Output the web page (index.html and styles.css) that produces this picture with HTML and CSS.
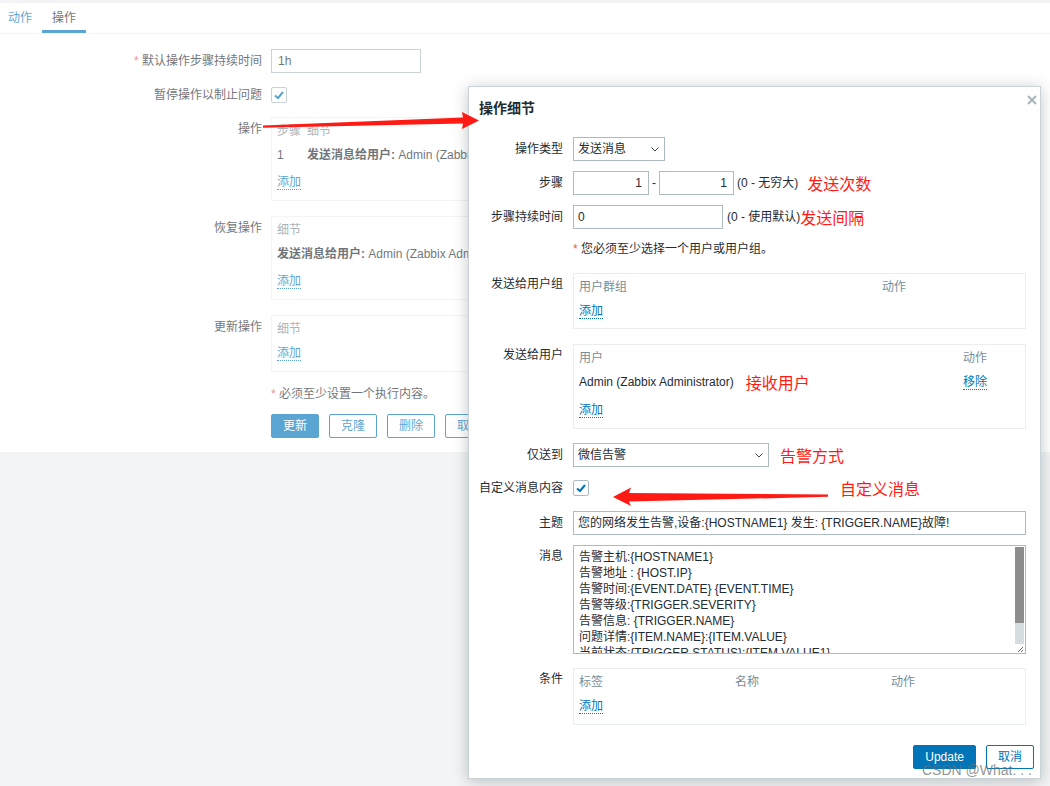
FILE: index.html
```html
<!DOCTYPE html>
<html lang="zh-CN">
<head>
<meta charset="utf-8">
<title>操作</title>
<link rel="stylesheet" href="styles.css">
</head>
<body>
<div class="page">
  <div class="tabs">
    <span class="tab tab-first tab-link">动作</span>
    <span class="tab tab-active">操作</span>
  </div>
  <div class="form">
    <div class="row">
      <div class="label"><span class="req">*</span> 默认操作步骤持续时间</div>
      <div class="input w150">1h</div>
    </div>
    <div class="row mt10">
      <div class="label">暂停操作以制止问题</div>
      <div class="check-cell"><span class="checkbox"><svg width="14" height="14" viewBox="0 0 14 14"><path d="M3 7.5 L6 10 L11 4" fill="none" stroke="#0275b8" stroke-width="2"/></svg></span></div>
    </div>
    <div class="row mt10">
      <div class="label">操作</div>
      <div class="box mbox">
        <div class="brow head"><span class="c-step">步骤</span><span>细节</span></div>
        <div class="brow"><span class="c-step">1</span><span><b>发送消息给用户:</b> Admin (Zabbix Administrator) 通过 所有介质</span></div>
        <div class="brow add"><span class="link">添加</span></div>
      </div>
    </div>
    <div class="row mt15">
      <div class="label">恢复操作</div>
      <div class="box mbox">
        <div class="brow head"><span>细节</span></div>
        <div class="brow"><span><b>发送消息给用户:</b> Admin (Zabbix Administrator) 通过 所有介质</span></div>
        <div class="brow add"><span class="link">添加</span></div>
      </div>
    </div>
    <div class="row mt15">
      <div class="label">更新操作</div>
      <div class="box mbox">
        <div class="brow head"><span>细节</span></div>
        <div class="brow"><span class="link">添加</span></div>
      </div>
    </div>
    <div class="row mt14">
      <div class="label"></div>
      <div class="note"><span class="req">*</span> 必须至少设置一个执行内容。</div>
    </div>
    <div class="row mt12">
      <div class="label"></div>
      <div class="buttons">
        <span class="btn btn-primary">更新</span>
        <span class="btn">克隆</span>
        <span class="btn">删除</span>
        <span class="btn">取消</span>
      </div>
    </div>
  </div>
</div>

<div class="overlay-bg"></div>

<div class="dialog">
  <div class="dialog-head">操作细节</div>
  <span class="close"><svg width="10" height="10" viewBox="0 0 10 10"><path d="M1 1 L9 9 M9 1 L1 9" stroke="#a9b6bd" stroke-width="2.2"/></svg></span>
  <div class="dialog-body">
    <div class="drow">
      <div class="dlabel">操作类型</div>
      <div class="input select w92"><span>发送消息</span><svg class="chev" width="8" height="5" viewBox="0 0 8 5"><path d="M0.5 0.5 L4 4 L7.5 0.5" fill="none" stroke="#3c474d" stroke-width="1"/></svg></div>
    </div>
    <div class="drow mt10">
      <div class="dlabel">步骤</div>
      <div class="ctrl-line">
        <div class="input num w76">1</div><span class="dash">-</span><div class="input num w75">1</div>
        <span class="hint ml3">(0 - 无穷大)</span><span class="anno ml9">发送次数</span>
      </div>
    </div>
    <div class="drow mt10">
      <div class="dlabel">步骤持续时间</div>
      <div class="ctrl-line">
        <div class="input w150 pl5">0</div>
        <span class="hint ml4">(0 - 使用默认)</span><span class="anno">发送间隔</span>
      </div>
    </div>
    <div class="drow mt10">
      <div class="dlabel"></div>
      <div class="dnote"><span class="req">*</span> 您必须至少选择一个用户或用户组。</div>
    </div>
    <div class="drow mt14">
      <div class="dlabel lt">发送给用户组</div>
      <div class="box dbox pb5">
        <div class="brow head"><span class="c-group">用户群组</span><span>动作</span></div>
        <div class="brow"><span class="link">添加</span></div>
      </div>
    </div>
    <div class="drow mt15">
      <div class="dlabel lt">发送给用户</div>
      <div class="box dbox">
        <div class="brow head"><span class="c-user">用户</span><span>动作</span></div>
        <div class="brow"><span class="c-user">Admin (Zabbix Administrator)<span class="anno ml12">接收用户</span></span><span class="link">移除</span></div>
        <div class="brow add4"><span class="link">添加</span></div>
      </div>
    </div>
    <div class="drow mt14">
      <div class="dlabel">仅送到</div>
      <div class="ctrl-line">
        <div class="input select w196"><span>微信告警</span><svg class="chev" width="8" height="5" viewBox="0 0 8 5"><path d="M0.5 0.5 L4 4 L7.5 0.5" fill="none" stroke="#3c474d" stroke-width="1"/></svg></div>
        <span class="anno ml11">告警方式</span>
      </div>
    </div>
    <div class="drow mt9">
      <div class="dlabel">自定义消息内容</div>
      <div class="ctrl-line">
        <span class="checkbox"><svg width="14" height="14" viewBox="0 0 14 14"><path d="M3 7.5 L6 10 L11 4" fill="none" stroke="#0275b8" stroke-width="2"/></svg></span>
        <span class="anno ml251">自定义消息</span>
      </div>
    </div>
    <div class="drow mt11">
      <div class="dlabel">主题</div>
      <div class="input wfull pl5">您的网络发生告警,设备:{HOSTNAME1} 发生: {TRIGGER.NAME}故障!</div>
    </div>
    <div class="drow mt10">
      <div class="dlabel lt">消息</div>
      <div class="textarea">
        <div class="ta-text">
          <div>告警主机:{HOSTNAME1}</div>
          <div>告警地址 : {HOST.IP}</div>
          <div>告警时间:{EVENT.DATE} {EVENT.TIME}</div>
          <div>告警等级:{TRIGGER.SEVERITY}</div>
          <div>告警信息: {TRIGGER.NAME}</div>
          <div>问题详情:{ITEM.NAME}:{ITEM.VALUE}</div>
          <div>当前状态:{TRIGGER.STATUS}:{ITEM.VALUE1}</div>
        </div>
        <div class="ta-scroll">
          <div class="ta-thumb"></div>
          <div class="ta-track"></div>
          <div class="ta-corner"><svg width="9" height="9" viewBox="0 0 9 9"><path d="M8 3 L3 8 M8 6 L6 8" stroke="#6b6b6b" stroke-width="1"/></svg></div>
        </div>
      </div>
    </div>
    <div class="drow mt14">
      <div class="dlabel lt">条件</div>
      <div class="box dbox">
        <div class="brow head"><span class="c-cond">标签</span><span class="c-cond">名称</span><span>动作</span></div>
        <div class="brow"><span class="link">添加</span></div>
      </div>
    </div>
  </div>
  <div class="dialog-foot">
    <span class="btn btn-primary">Update</span>
    <span class="btn">取消</span>
  </div>
</div>

<svg class="annot" width="1050" height="786" viewBox="0 0 1050 786">
  <polygon points="263,125.6 463,117.6 462,112 479,120.4 462,129 463,123.4 263,127.8" fill="#ff1b14"/>
  <polygon points="613,497 631,487.5 629,493 828,494.6 828,496.8 629,501.6 631,506" fill="#ff1b14"/>
</svg>

<div class="watermark">CSDN @What. . .</div>
</body>
</html>
```

FILE: styles.css
```css
* { box-sizing: border-box; }

html, body {
  margin: 0;
  padding: 0;
}

body {
  width: 1050px;
  height: 786px;
  overflow: hidden;
  position: relative;
  background: #ebeef0;
  font-family: "Liberation Sans", "Noto Sans CJK SC", sans-serif;
  font-size: 12px;
  line-height: 16px;
  color: #1f2c33;
}

/* ---------- background page ---------- */
.page {
  margin-top: 3px;
  background: #fff;
  padding-bottom: 14px;
}

.tabs {
  display: flex;
  height: 31px;
  border-bottom: 1px solid #ebeef0;
}

.tab {
  padding: 0 10px;
  line-height: 30px;
  height: 30px;
}

.tab-first { padding-left: 8px; }
.tab-link { color: #0275b8; }
.tab-active { box-shadow: inset 0 -3px 0 #0275b8; }

.form { padding-top: 15px; }

.row {
  display: flex;
  align-items: flex-start;
  gap: 9px;
}

.mt9 { margin-top: 9px; }
.mt10 { margin-top: 10px; }
.mt11 { margin-top: 11px; }
.mt12 { margin-top: 12px; }
.mt14 { margin-top: 14px; }
.mt15 { margin-top: 15px; }

.label {
  width: 262px;
  flex: none;
  text-align: right;
  line-height: 24px;
  white-space: nowrap;
}

.req { color: #e45959; }

.input {
  height: 24px;
  border: 1px solid #acbbc2;
  background: #fff;
  padding: 0 6px;
  line-height: 22px;
  white-space: nowrap;
  overflow: hidden;
  flex: none;
}

.pl5 { padding-left: 4px; }
.w75 { width: 75px; }
.w76 { width: 76px; }
.w92 { width: 92px; }
.w150 { width: 150px; }
.w196 { width: 196px; }
.wfull { width: 453px; }

.num {
  text-align: right;
  padding-right: 6px;
}

.select {
  display: flex;
  align-items: center;
  justify-content: space-between;
  padding: 0 5px 0 4px;
}

.chev { flex: none; }

.check-cell {
  height: 24px;
  display: flex;
  align-items: center;
}

.checkbox {
  width: 16px;
  height: 16px;
  border: 1px solid #acbbc2;
  border-radius: 2px;
  background: #fff;
  display: inline-flex;
  align-items: center;
  justify-content: center;
  flex: none;
}

.box {
  border: 1px solid #ebeef0;
  padding: 1px 5px 6px;
  white-space: nowrap;
  overflow: hidden;
}

.box.pb5 { padding-bottom: 5px; }

.mbox { width: 760px; }
.dbox { width: 453px; }

.brow {
  display: flex;
  line-height: 24px;
  height: 24px;
  align-items: center;
}

.brow.add { margin-top: 3px; }
.brow.add4 { margin-top: 4px; }

.head { color: #768d99; }

.c-step { width: 30px; flex: none; }
.c-group { width: 303px; flex: none; }
.c-user { width: 384px; flex: none; display: flex; align-items: center; }
.c-cond { width: 156px; flex: none; }

.link {
  color: #0275b8;
  display: inline-block;
  line-height: 14px;
  border-bottom: 1px dotted #0275b8;
}

.note { line-height: 16px; }

.buttons {
  display: flex;
  gap: 10px;
}

.btn {
  display: inline-block;
  height: 24px;
  padding: 0 11px;
  border: 1px solid #0275b8;
  border-radius: 2px;
  background: #fff;
  color: #0275b8;
  line-height: 22px;
  white-space: nowrap;
}

.btn-primary {
  background: #0275b8;
  color: #fff;
}

/* page dimming layer */
.overlay-bg {
  position: absolute;
  inset: 0;
  background: rgba(255, 255, 255, 0.35);
}

/* ---------- dialog ---------- */
.dialog {
  position: absolute;
  left: 468px;
  top: 86px;
  width: 573px;
  height: 693px;
  background: #fff;
  border: 1px solid #c9d2d7;
  box-shadow: 0 2px 14px rgba(40, 50, 60, 0.28);
}

.dialog-head {
  padding: 13px 10px;
  font-size: 14px;
  font-weight: bold;
  line-height: 16px;
}

.close {
  position: absolute;
  top: 8px;
  right: 3px;
  width: 10px;
  height: 10px;
  display: block;
}

.close svg { display: block; }

.dialog-body { padding-top: 8px; }

.drow {
  display: flex;
  align-items: flex-start;
  gap: 10px;
}

.dlabel {
  width: 94px;
  flex: none;
  text-align: right;
  line-height: 24px;
  white-space: nowrap;
}

.dlabel.lt {
  line-height: 16px;
  padding-top: 3px;
}

.ctrl-line {
  display: flex;
  align-items: center;
  height: 24px;
  white-space: nowrap;
}

.dash { margin: 0 3px; }

.hint { color: #1f2c33; }

.ml3 { margin-left: 3px; }
.ml4 { margin-left: 4px; }
.ml9 { margin-left: 9px; }
.ml11 { margin-left: 11px; }
.ml12 { margin-left: 12px; }
.ml251 { margin-left: 251px; }

.anno {
  color: #ff1b14;
  font-family: "Noto Sans CJK SC", sans-serif;
  font-size: 16px;
  line-height: 20px;
}

.dnote {
  line-height: 20px;
  height: 20px;
}

.textarea {
  width: 453px;
  height: 109px;
  border: 1px solid #acbbc2;
  display: flex;
  overflow: hidden;
  flex: none;
}

.ta-text {
  flex: 1;
  padding: 3px 5px 0;
  line-height: 16px;
  white-space: nowrap;
  overflow: hidden;
}

.ta-scroll {
  width: 9px;
  flex: none;
  display: flex;
  flex-direction: column;
  margin: 1px 1px 0 0;
}

.ta-thumb {
  height: 76px;
  background: #8d8d8d;
}

.ta-track {
  flex: 1;
  background: #d6dde1;
}

.ta-corner {
  height: 9px;
  background: #fff;
  display: flex;
}

.dialog-foot {
  display: flex;
  justify-content: flex-end;
  gap: 10px;
  padding-right: 6px;
  margin-top: 20px;
}

/* ---------- annotations on top ---------- */
.annot {
  position: absolute;
  left: 0;
  top: 0;
  pointer-events: none;
}

.watermark {
  position: absolute;
  left: 922px;
  top: 762px;
  font-family: "Liberation Sans", sans-serif;
  font-size: 14px;
  line-height: 16px;
  color: rgba(110, 110, 110, 0.75);
  white-space: nowrap;
}
```
